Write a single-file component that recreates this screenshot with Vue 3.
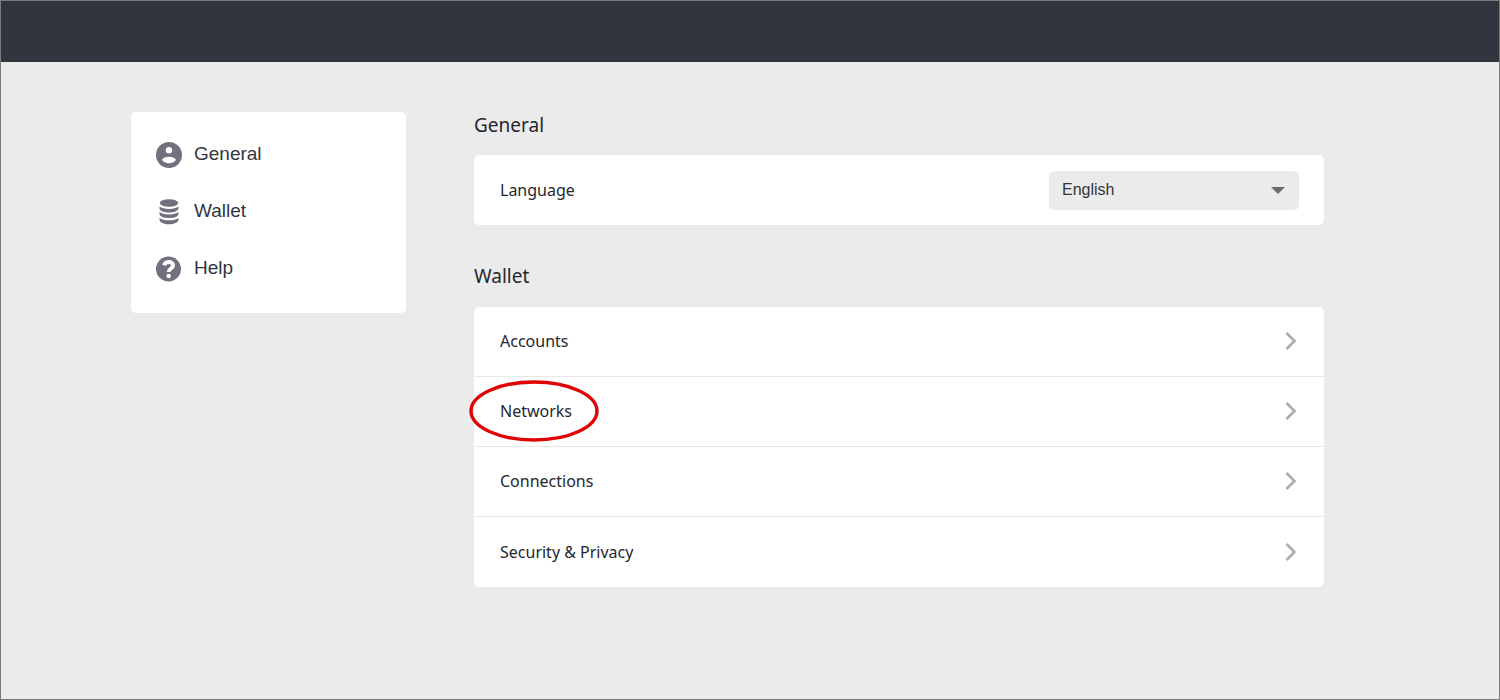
<script setup>
import { ref } from 'vue'

const language = ref('English')
const settings = [
  { label: 'Accounts' },
  { label: 'Networks', highlighted: true },
  { label: 'Connections' },
  { label: 'Security & Privacy' },
]
</script>

<template>
  <div class="page">
    <header class="topbar"></header>
    <div class="content">
      <nav class="sidebar" aria-label="Settings sections">
        <a class="nav-item" href="#general">
          <svg class="nav-icon" viewBox="0 0 26 26" aria-hidden="true">
            <circle cx="13" cy="13" r="13" />
            <circle class="cut" cx="13" cy="8.2" r="3.2" />
            <path class="cut" d="M6 17.800C7.200 15.800 9.800 14.800 13 14.800S18.800 15.800 20 17.800C18.700 20 16 21.200 13 21.200S7.300 20 6 17.800Z" />
          </svg>
          <span class="nav-text">General</span>
        </a>
        <a class="nav-item" href="#wallet">
          <svg class="nav-icon" viewBox="0 0 26 26" aria-hidden="true">
            <ellipse cx="13" cy="4" rx="9.200" ry="3.800" />
            <path d="M3.500 7.600C5.500 9.200 9 10 13 10S20.500 9.200 22.500 7.600V9.400C22 11.900 18.200 13.400 13 13.400S4 11.900 3.500 9.400Z" />
            <path d="M3.500 13.100C5.500 14.700 9 15.500 13 15.500S20.500 14.700 22.500 13.100V14.900C22 17.400 18.200 19 13 19S4 17.400 3.500 14.900Z" />
            <path d="M3.500 18.900C5.500 20.500 9 21.300 13 21.300S20.500 20.500 22.500 18.900V20.900C22 23.400 18.200 25.200 13 25.200S4 23.400 3.500 20.900Z" />
          </svg>
          <span class="nav-text">Wallet</span>
        </a>
        <a class="nav-item" href="#help">
          <svg class="nav-icon" viewBox="0 0 26 26" aria-hidden="true">
            <circle cx="12.500" cy="13" r="12.500" />
            <path class="mark" d="M8 9.300C8.900 6.900 10.600 6 12.700 6C15.400 6 17.100 7.500 17.100 9.500C17.100 12.500 12.600 12.600 12.600 15.900" />
            <circle class="cut" cx="12.600" cy="20" r="2.300" />
          </svg>
          <span class="nav-text">Help</span>
        </a>
      </nav>

      <main class="main">
        <section id="general">
          <h2>General</h2>
          <div class="card">
            <div class="row">
              <label for="language">Language</label>
              <div class="select-box">
                <select id="language" v-model="language">
                  <option>English</option>
                </select>
                <svg class="caret" viewBox="0 0 14 7" aria-hidden="true"><path d="M0 0H14L7 7Z" /></svg>
              </div>
            </div>
          </div>
        </section>

        <section id="wallet">
          <h2>Wallet</h2>
          <div class="card">
            <a v-for="item in settings" :key="item.label" class="row" href="#wallet">
              <span class="label">
                {{ item.label }}
                <svg v-if="item.highlighted" class="ring" viewBox="0 0 130 62" aria-hidden="true">
                  <ellipse cx="65" cy="31" rx="63" ry="29" />
                </svg>
              </span>
              <svg class="chevron" viewBox="0 0 12 18" aria-hidden="true"><path d="M1.500 1L9.500 9L1.500 17" /></svg>
            </a>
          </div>
        </section>
      </main>
    </div>
  </div>
</template>

<style>
body {
  background: #ebebeb;
}
</style>

<style scoped>
.page {
  box-sizing: border-box;
  min-height: 100vh;
  border: 1px solid #7b7b7b;
  background: #ebebeb;
  color: #24272f;
  font-family: "Noto Sans", sans-serif;
  font-size: 16px;
  line-height: 24px;
}
.topbar {
  height: 61px;
  background: #31353d;
}
.content {
  display: flex;
  align-items: flex-start;
  gap: 68px;
  padding: 50px 175px 50px 130px;
}
.sidebar {
  flex: 0 0 275px;
  box-sizing: border-box;
  padding: 14px 25px 16px;
  border-radius: 5px;
  background: #fff;
  font-family: "Liberation Sans", Arial, sans-serif;
  font-size: 19px;
}
.nav-item {
  display: flex;
  align-items: center;
  gap: 12px;
  height: 57px;
  color: #31353d;
  text-decoration: none;
}
.nav-icon {
  width: 26px;
  height: 26px;
  fill: #71707f;
}
.nav-icon .cut {
  fill: #fff;
}
.nav-icon .mark {
  fill: none;
  stroke: #fff;
  stroke-width: 3.9;
}
.nav-text {
  padding-bottom: 2px;
}
.main {
  flex: 1;
  min-width: 0;
}
section + section {
  margin-top: 38px;
}
h2 {
  margin: 0 0 18px;
  font-size: 19px;
  font-weight: 400;
  line-height: 26px;
}
section:first-child h2 {
  margin-bottom: 17px;
}
.card {
  border-radius: 5px;
  background: #fff;
}
.row {
  display: flex;
  align-items: center;
  justify-content: space-between;
  box-sizing: border-box;
  height: 70px;
  padding: 0 25px 0 26px;
  color: inherit;
  text-decoration: none;
}
.row:not(:last-child) {
  padding-bottom: 1px;
  border-bottom: 1px solid #e8e8e8;
}
.select-box {
  position: relative;
  width: 250px;
}
select {
  display: block;
  width: 100%;
  height: 39px;
  padding: 0 40px 2px 13px;
  border: 0;
  border-radius: 5px;
  appearance: none;
  background: #ebebeb;
  color: #31353d;
  font: 16px "Liberation Sans", Arial, sans-serif;
}
.caret {
  position: absolute;
  top: 16px;
  right: 14px;
  width: 14px;
  height: 7px;
  fill: #6b6b6b;
  pointer-events: none;
}
.label {
  position: relative;
}
.ring {
  position: absolute;
  top: -19px;
  left: -31px;
  width: 130px;
  height: 62px;
  fill: none;
  stroke: #e00505;
  stroke-width: 3.4;
  pointer-events: none;
}
.chevron {
  width: 12px;
  height: 18px;
  margin-right: 2px;
  fill: none;
  stroke: #acacb3;
  stroke-width: 2.6;
}
</style>
